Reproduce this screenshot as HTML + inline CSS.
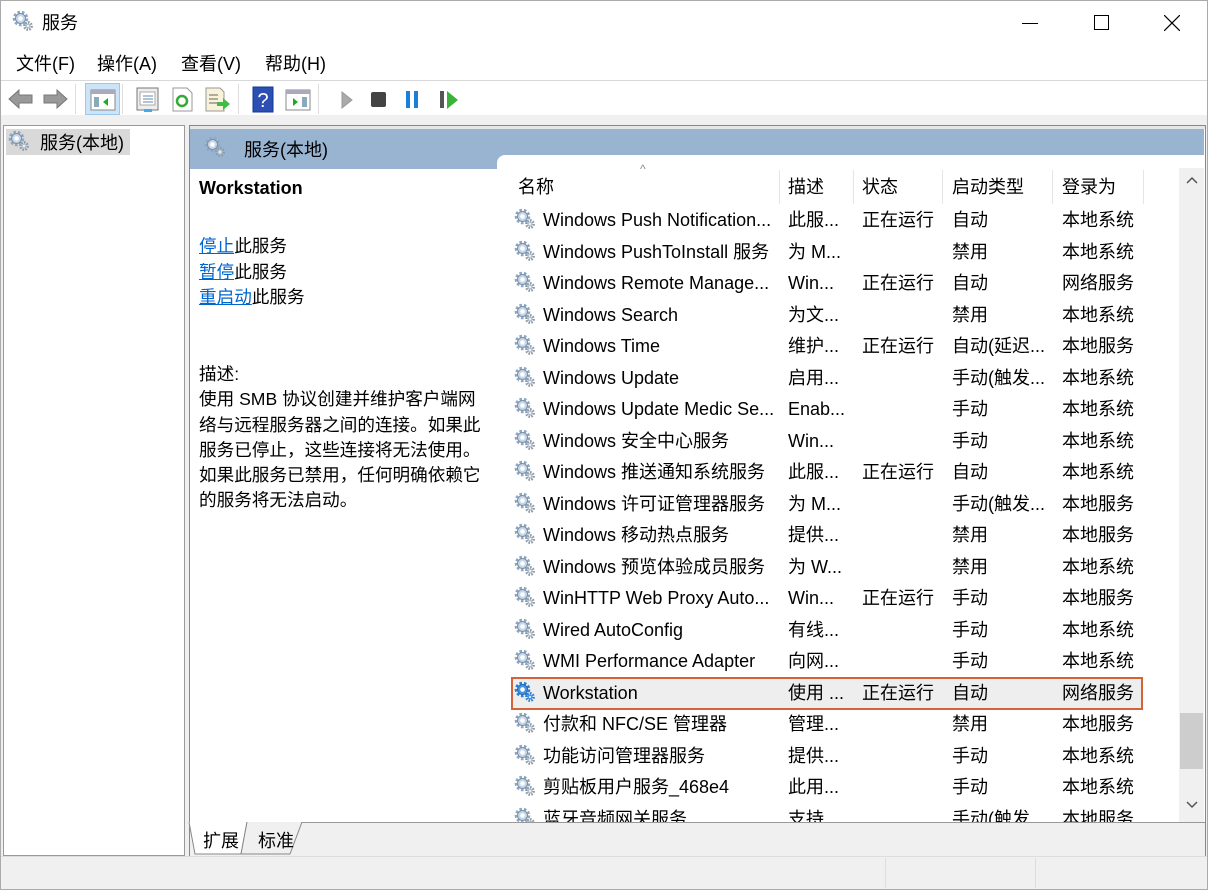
<!DOCTYPE html>
<html><head><meta charset="utf-8">
<style>
*{margin:0;padding:0;box-sizing:border-box}
body{width:1208px;height:890px;overflow:hidden;background:#f0f0f0;font-family:"Liberation Sans","Noto Sans CJK SC",sans-serif;color:#000;position:relative}
.a{position:absolute;white-space:nowrap}
.t{font-size:18px;line-height:22px}
a{color:#0066cc;text-decoration:underline}
</style></head><body>
<svg width="0" height="0" style="position:absolute">
<defs>
<g id="g">
<circle cx="16" cy="16" r="3.6" fill="none" stroke="#8a9aa8" stroke-width="2.6" stroke-dasharray="1.6 1.2"/>
<circle cx="16" cy="16" r="2.6" fill="#b8c2cc"/>
<circle cx="16" cy="16" r="1" fill="#fff"/>
<circle cx="8.5" cy="8.5" r="6" fill="none" stroke="#8ea6c0" stroke-width="3.6" stroke-dasharray="2.4 1.8"/>
<circle cx="8.5" cy="8.5" r="5" fill="#c8d7e6" stroke="#7890ab" stroke-width="1"/>
<circle cx="8.5" cy="8.5" r="2.3" fill="#fff"/>
</g>
<g id="gb">
<circle cx="16" cy="16" r="3.6" fill="none" stroke="#2f7fd0" stroke-width="2.6" stroke-dasharray="1.6 1.2"/>
<circle cx="16" cy="16" r="2.6" fill="#4a95e0"/>
<circle cx="16" cy="16" r="1" fill="#fff"/>
<circle cx="8.5" cy="8.5" r="6" fill="none" stroke="#2f7fd0" stroke-width="3.6" stroke-dasharray="2.4 1.8"/>
<circle cx="8.5" cy="8.5" r="5" fill="#4a95e0" stroke="#1f6bc0" stroke-width="1"/>
<circle cx="8.5" cy="8.5" r="2.3" fill="#fff"/>
</g>
</defs></svg>

<div class="a" style="left:0;top:0;width:1208px;height:890px;border:1px solid #aaa"></div>
<div class="a" style="left:1px;top:1px;width:1206px;height:79px;background:#fff"></div>
<svg class="a" style="left:12px;top:10px" width="24" height="24"><use href="#g"/></svg>
<div class="a t" style="left:42px;top:12px">服务</div>
<div class="a" style="left:1022px;top:23px;width:16px;height:1px;background:#000"></div>
<div class="a" style="left:1094px;top:15px;width:15px;height:15px;border:1px solid #000"></div>
<svg class="a" style="left:1164px;top:15px" width="16" height="16"><path d="M0 0L16 16M16 0L0 16" stroke="#000" stroke-width="1.2"/></svg>
<div class="a t" style="left:16px;top:53px">文件(F)</div>
<div class="a t" style="left:97px;top:53px">操作(A)</div>
<div class="a t" style="left:181px;top:53px">查看(V)</div>
<div class="a t" style="left:265px;top:53px">帮助(H)</div>
<div class="a" style="left:1px;top:80px;width:1206px;height:1px;background:#d8d8d8"></div>
<div class="a" style="left:1px;top:81px;width:1206px;height:34px;background:#fff"></div>
<svg class="a" style="left:6px;top:86px" width="62" height="26">
<path d="M3 13L13 4V9H26V17H13V22Z" fill="#999" stroke="#777"/>
<path d="M61 13L51 4V9H38V17H51V22Z" fill="#999" stroke="#777"/>
</svg>
<div class="a" style="left:75px;top:84px;width:1px;height:30px;background:#ddd"></div>
<div class="a" style="left:85px;top:83px;width:35px;height:32px;background:#cce4f7;border:1px solid #99c9ef"></div>
<svg class="a" style="left:90px;top:88px" width="26" height="24"><rect x="1" y="2" width="24" height="20" fill="#fff" stroke="#888"/><rect x="1" y="2" width="24" height="4" fill="#aab"/><rect x="4" y="9" width="5" height="10" fill="#8ab"/><path d="M18 10L13 14L18 18Z" fill="#2a2"/></svg>
<div class="a" style="left:122px;top:84px;width:1px;height:30px;background:#ddd"></div>
<svg class="a" style="left:136px;top:87px" width="24" height="26"><rect x="1" y="1" width="21" height="22" fill="#eee" stroke="#777"/><rect x="4" y="5" width="15" height="13" fill="#fff" stroke="#aaa"/><path d="M7 9H17M7 12H17M7 15H17" stroke="#68a"/><rect x="8" y="22" width="8" height="3" fill="#4ae"/></svg>
<svg class="a" style="left:172px;top:87px" width="22" height="26"><path d="M1 1H15L20 6V24H1Z" fill="#fff" stroke="#999"/><circle cx="10" cy="14" r="5" fill="none" stroke="#3a3" stroke-width="2.5"/></svg>
<svg class="a" style="left:205px;top:87px" width="26" height="26"><path d="M1 1H15L19 5V24H1Z" fill="#f8f2d8" stroke="#999"/><path d="M4 8H13M4 12H13M4 16H13" stroke="#666"/><path d="M12 15H18V11L25 17L18 23V19H12Z" fill="#4b4"/></svg>
<div class="a" style="left:238px;top:84px;width:1px;height:30px;background:#ddd"></div>
<svg class="a" style="left:252px;top:86px" width="22" height="27"><rect x="1" y="1" width="20" height="25" fill="#2b4fb3" stroke="#123a90"/><text x="11" y="21" text-anchor="middle" fill="#fff" font-size="20" font-family="Liberation Sans">?</text></svg>
<svg class="a" style="left:285px;top:88px" width="26" height="24"><rect x="1" y="2" width="24" height="20" fill="#fff" stroke="#888"/><rect x="1" y="2" width="24" height="4" fill="#aab"/><rect x="17" y="9" width="5" height="10" fill="#8ab"/><path d="M8 10L13 14L8 18Z" fill="#2a2"/></svg>
<div class="a" style="left:318px;top:84px;width:1px;height:30px;background:#ddd"></div>
<svg class="a" style="left:340px;top:90px" width="14" height="20"><path d="M2 2L12 10L2 18Z" fill="#aaa" stroke="#999"/></svg>
<div class="a" style="left:371px;top:92px;width:15px;height:15px;background:#444;border-radius:2px"></div>
<div class="a" style="left:406px;top:91px;width:4px;height:17px;background:#1a7fd8"></div>
<div class="a" style="left:414px;top:91px;width:4px;height:17px;background:#1a7fd8"></div>
<div class="a" style="left:440px;top:91px;width:4px;height:17px;background:#555"></div>
<svg class="a" style="left:446px;top:90px" width="14" height="20"><path d="M1 1L12 10L1 19Z" fill="#3bb33b"/></svg>

<div class="a" style="left:3px;top:125px;width:182px;height:731px;background:#fff;border:1px solid #999"></div>
<div class="a" style="left:6px;top:129px;width:124px;height:26px;background:#d9d9d9"></div>
<svg class="a" style="left:8px;top:130px" width="24" height="24"><use href="#g"/></svg>
<div class="a t" style="left:40px;top:132px">服务(本地)</div>

<div class="a" style="left:189px;top:125px;width:1017px;height:731px;border:1px solid #888;background:#fff"></div>
<div class="a" style="left:190px;top:126px;width:1015px;height:3px;background:#e6e6e6"></div>
<div class="a" style="left:190px;top:129px;width:1014px;height:40px;background:#99b4d1"></div>
<div class="a" style="left:497px;top:155px;width:707px;height:14px;background:#fff;border-top-left-radius:8px"></div>
<svg class="a" style="left:204px;top:136px" width="24" height="24"><use href="#g"/></svg>
<div class="a t" style="left:244px;top:139px">服务(本地)</div>

<div class="a" style="left:199px;top:178px;font-size:18px;font-weight:bold">Workstation</div>
<div class="a" style="left:199px;top:234px;font-size:17.6px;line-height:25.5px">
<a>停止</a>此服务<br><a>暂停</a>此服务<br><a>重启动</a>此服务</div>
<div class="a" style="left:199px;top:362px;font-size:17.6px;line-height:25.3px">描述:<br>使用 SMB 协议创建并维护客户端网<br>络与远程服务器之间的连接。如果此<br>服务已停止，这些连接将无法使用。<br>如果此服务已禁用，任何明确依赖它<br>的服务将无法启动。</div>

<div class="a" style="left:640px;top:162px;font-size:12px;color:#888">^</div>
<div class="a t" style="left:518px;top:176px">名称</div>
<div class="a" style="left:779px;top:170px;width:1px;height:34px;background:#e5e5e5"></div>
<div class="a t" style="left:788px;top:176px">描述</div>
<div class="a" style="left:853px;top:170px;width:1px;height:34px;background:#e5e5e5"></div>
<div class="a t" style="left:862px;top:176px">状态</div>
<div class="a" style="left:942px;top:170px;width:1px;height:34px;background:#e5e5e5"></div>
<div class="a t" style="left:952px;top:176px">启动类型</div>
<div class="a" style="left:1052px;top:170px;width:1px;height:34px;background:#e5e5e5"></div>
<div class="a t" style="left:1062px;top:176px">登录为</div>
<div class="a" style="left:1143px;top:170px;width:1px;height:34px;background:#e5e5e5"></div>

<div class="a" style="left:511px;top:677px;width:632px;height:33px;background:#eeeeee;border:2px solid #d4633a"></div>

<div class="a" style="left:505px;top:204px;width:670px;height:618px;overflow:hidden">
<svg class="a" style="left:9px;top:4px" width="24" height="24"><use href="#g"/></svg><div class="a t" style="left:38px;top:5px">Windows Push Notification...</div><div class="a t" style="left:283px;top:5px">此服...</div><div class="a t" style="left:357px;top:5px">正在运行</div><div class="a t" style="left:447px;top:5px">自动</div><div class="a t" style="left:557px;top:5px">本地系统</div>
<svg class="a" style="left:9px;top:35.5px" width="24" height="24"><use href="#g"/></svg><div class="a t" style="left:38px;top:36.5px">Windows PushToInstall 服务</div><div class="a t" style="left:283px;top:36.5px">为 M...</div><div class="a t" style="left:447px;top:36.5px">禁用</div><div class="a t" style="left:557px;top:36.5px">本地系统</div>
<svg class="a" style="left:9px;top:67px" width="24" height="24"><use href="#g"/></svg><div class="a t" style="left:38px;top:68px">Windows Remote Manage...</div><div class="a t" style="left:283px;top:68px">Win...</div><div class="a t" style="left:357px;top:68px">正在运行</div><div class="a t" style="left:447px;top:68px">自动</div><div class="a t" style="left:557px;top:68px">网络服务</div>
<svg class="a" style="left:9px;top:98.5px" width="24" height="24"><use href="#g"/></svg><div class="a t" style="left:38px;top:99.5px">Windows Search</div><div class="a t" style="left:283px;top:99.5px">为文...</div><div class="a t" style="left:447px;top:99.5px">禁用</div><div class="a t" style="left:557px;top:99.5px">本地系统</div>
<svg class="a" style="left:9px;top:130px" width="24" height="24"><use href="#g"/></svg><div class="a t" style="left:38px;top:131px">Windows Time</div><div class="a t" style="left:283px;top:131px">维护...</div><div class="a t" style="left:357px;top:131px">正在运行</div><div class="a t" style="left:447px;top:131px">自动(延迟...</div><div class="a t" style="left:557px;top:131px">本地服务</div>
<svg class="a" style="left:9px;top:161.5px" width="24" height="24"><use href="#g"/></svg><div class="a t" style="left:38px;top:162.5px">Windows Update</div><div class="a t" style="left:283px;top:162.5px">启用...</div><div class="a t" style="left:447px;top:162.5px">手动(触发...</div><div class="a t" style="left:557px;top:162.5px">本地系统</div>
<svg class="a" style="left:9px;top:193px" width="24" height="24"><use href="#g"/></svg><div class="a t" style="left:38px;top:194px">Windows Update Medic Se...</div><div class="a t" style="left:283px;top:194px">Enab...</div><div class="a t" style="left:447px;top:194px">手动</div><div class="a t" style="left:557px;top:194px">本地系统</div>
<svg class="a" style="left:9px;top:224.5px" width="24" height="24"><use href="#g"/></svg><div class="a t" style="left:38px;top:225.5px">Windows 安全中心服务</div><div class="a t" style="left:283px;top:225.5px">Win...</div><div class="a t" style="left:447px;top:225.5px">手动</div><div class="a t" style="left:557px;top:225.5px">本地系统</div>
<svg class="a" style="left:9px;top:256px" width="24" height="24"><use href="#g"/></svg><div class="a t" style="left:38px;top:257px">Windows 推送通知系统服务</div><div class="a t" style="left:283px;top:257px">此服...</div><div class="a t" style="left:357px;top:257px">正在运行</div><div class="a t" style="left:447px;top:257px">自动</div><div class="a t" style="left:557px;top:257px">本地系统</div>
<svg class="a" style="left:9px;top:287.5px" width="24" height="24"><use href="#g"/></svg><div class="a t" style="left:38px;top:288.5px">Windows 许可证管理器服务</div><div class="a t" style="left:283px;top:288.5px">为 M...</div><div class="a t" style="left:447px;top:288.5px">手动(触发...</div><div class="a t" style="left:557px;top:288.5px">本地服务</div>
<svg class="a" style="left:9px;top:319px" width="24" height="24"><use href="#g"/></svg><div class="a t" style="left:38px;top:320px">Windows 移动热点服务</div><div class="a t" style="left:283px;top:320px">提供...</div><div class="a t" style="left:447px;top:320px">禁用</div><div class="a t" style="left:557px;top:320px">本地服务</div>
<svg class="a" style="left:9px;top:350.5px" width="24" height="24"><use href="#g"/></svg><div class="a t" style="left:38px;top:351.5px">Windows 预览体验成员服务</div><div class="a t" style="left:283px;top:351.5px">为 W...</div><div class="a t" style="left:447px;top:351.5px">禁用</div><div class="a t" style="left:557px;top:351.5px">本地系统</div>
<svg class="a" style="left:9px;top:382px" width="24" height="24"><use href="#g"/></svg><div class="a t" style="left:38px;top:383px">WinHTTP Web Proxy Auto...</div><div class="a t" style="left:283px;top:383px">Win...</div><div class="a t" style="left:357px;top:383px">正在运行</div><div class="a t" style="left:447px;top:383px">手动</div><div class="a t" style="left:557px;top:383px">本地服务</div>
<svg class="a" style="left:9px;top:413.5px" width="24" height="24"><use href="#g"/></svg><div class="a t" style="left:38px;top:414.5px">Wired AutoConfig</div><div class="a t" style="left:283px;top:414.5px">有线...</div><div class="a t" style="left:447px;top:414.5px">手动</div><div class="a t" style="left:557px;top:414.5px">本地系统</div>
<svg class="a" style="left:9px;top:445px" width="24" height="24"><use href="#g"/></svg><div class="a t" style="left:38px;top:446px">WMI Performance Adapter</div><div class="a t" style="left:283px;top:446px">向网...</div><div class="a t" style="left:447px;top:446px">手动</div><div class="a t" style="left:557px;top:446px">本地系统</div>
<svg class="a" style="left:9px;top:476.5px" width="24" height="24"><use href="#gb"/></svg><div class="a t" style="left:38px;top:477.5px">Workstation</div><div class="a t" style="left:283px;top:477.5px">使用 ...</div><div class="a t" style="left:357px;top:477.5px">正在运行</div><div class="a t" style="left:447px;top:477.5px">自动</div><div class="a t" style="left:557px;top:477.5px">网络服务</div>
<svg class="a" style="left:9px;top:508px" width="24" height="24"><use href="#g"/></svg><div class="a t" style="left:38px;top:509px">付款和 NFC/SE 管理器</div><div class="a t" style="left:283px;top:509px">管理...</div><div class="a t" style="left:447px;top:509px">禁用</div><div class="a t" style="left:557px;top:509px">本地服务</div>
<svg class="a" style="left:9px;top:539.5px" width="24" height="24"><use href="#g"/></svg><div class="a t" style="left:38px;top:540.5px">功能访问管理器服务</div><div class="a t" style="left:283px;top:540.5px">提供...</div><div class="a t" style="left:447px;top:540.5px">手动</div><div class="a t" style="left:557px;top:540.5px">本地系统</div>
<svg class="a" style="left:9px;top:571px" width="24" height="24"><use href="#g"/></svg><div class="a t" style="left:38px;top:572px">剪贴板用户服务_468e4</div><div class="a t" style="left:283px;top:572px">此用...</div><div class="a t" style="left:447px;top:572px">手动</div><div class="a t" style="left:557px;top:572px">本地系统</div>
<svg class="a" style="left:9px;top:602.5px" width="24" height="24"><use href="#g"/></svg><div class="a t" style="left:38px;top:603.5px">蓝牙音频网关服务</div><div class="a t" style="left:283px;top:603.5px">支持...</div><div class="a t" style="left:447px;top:603.5px">手动(触发...</div><div class="a t" style="left:557px;top:603.5px">本地服务</div>
</div>

<div class="a" style="left:1179px;top:168px;width:25px;height:654px;background:#f0f0f0"></div>
<svg class="a" style="left:1186px;top:176px" width="12" height="8"><path d="M1 7L6 2L11 7" fill="none" stroke="#555" stroke-width="1.5"/></svg>
<div class="a" style="left:1180px;top:713px;width:23px;height:56px;background:#cdcdcd"></div>
<svg class="a" style="left:1186px;top:801px" width="12" height="8"><path d="M1 1L6 6L11 1" fill="none" stroke="#555" stroke-width="1.5"/></svg>

<div class="a" style="left:190px;top:822px;width:1015px;height:34px;background:#f0f0f0;border-top:1px solid #999"></div>
<svg class="a" style="left:186px;top:822px" width="130" height="34"><path d="M3 0L9 32H55L61 0" fill="#fff" stroke="#888"/><path d="M61 0L55 32H104L116 0" fill="#f0f0f0" stroke="#888"/><path d="M4 0H60" stroke="#fff" stroke-width="2"/></svg>
<div class="a t" style="left:203px;top:830px">扩展</div>
<div class="a t" style="left:258px;top:830px">标准</div>

<div class="a" style="left:1px;top:856px;width:1206px;height:1px;background:#ddd"></div>
<div class="a" style="left:885px;top:858px;width:1px;height:30px;background:#ddd"></div>
<div class="a" style="left:1035px;top:858px;width:1px;height:30px;background:#ddd"></div>
</body></html>
